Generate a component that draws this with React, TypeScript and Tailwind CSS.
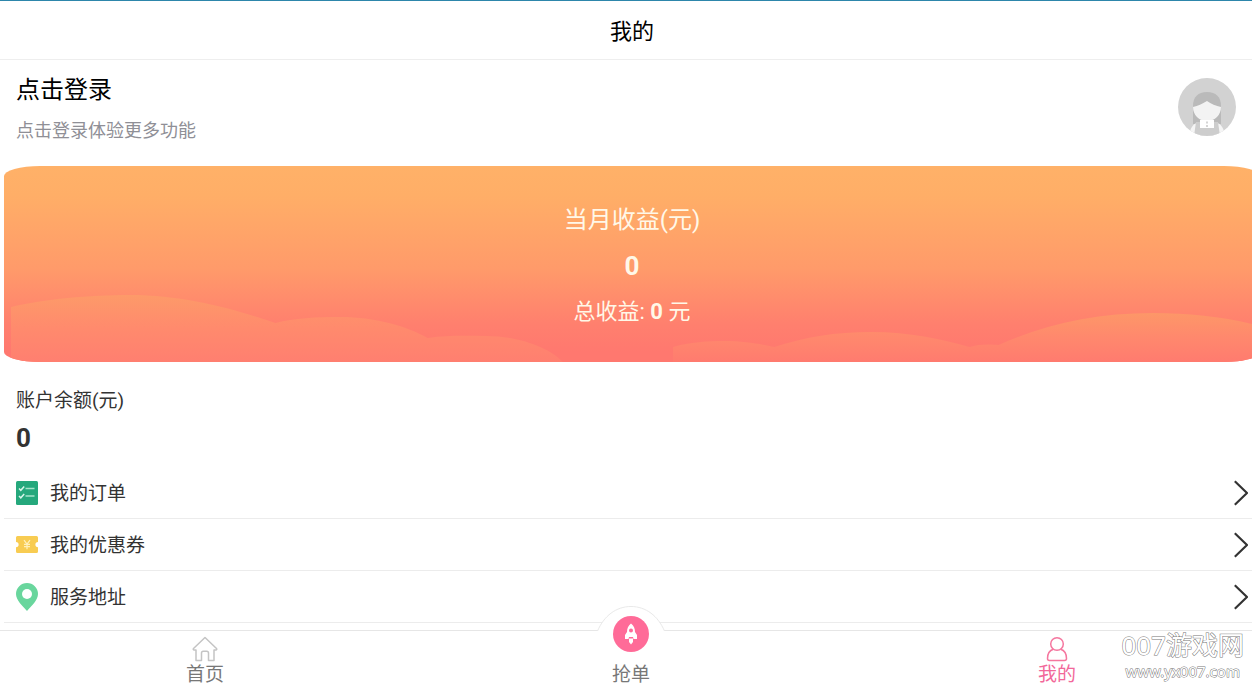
import type { ReactNode } from 'react'

function OrderIcon() {
  return (
    <svg viewBox="0 0 22 24" className="h-6 w-[22px]" fill="none" aria-hidden="true">
      <rect width="22" height="24" rx="1.5" fill="#25a87c" />
      <path d="M3 7.5l1.8 1.8L8.2 5.6M3 15l1.8 1.8 3.4-3.7" stroke="#d9f5ea" strokeWidth="1.5" />
      <path d="M9.5 7.5h9M9.5 15h9" stroke="#a5e2ca" strokeWidth="1.3" />
    </svg>
  )
}

function CouponIcon() {
  return (
    <svg viewBox="0 0 22 17" className="h-[17px] w-[22px]" fill="none" aria-hidden="true">
      <path
        d="M1.5 0h19A1.5 1.5 0 0 1 22 1.5V6a2.6 2.6 0 0 0 0 5.2v4.3a1.5 1.5 0 0 1-1.5 1.5h-19A1.5 1.5 0 0 1 0 15.5V11.2A2.6 2.6 0 0 0 0 6V1.5A1.5 1.5 0 0 1 1.5 0Z"
        fill="#f8cc52"
      />
      <path d="M8 4.2l3 3.8 3-3.8M8 8.4h6M8 10.7h6M11 8v5.2" stroke="#fff0bd" strokeWidth="1.2" />
    </svg>
  )
}

function PinIcon() {
  return (
    <svg viewBox="0 0 22 28" className="h-7 w-[22px]" aria-hidden="true">
      <path d="M11 0a11 11 0 0 1 11 11c0 6.2-6.5 12-11 17C6.5 23 0 17.2 0 11A11 11 0 0 1 11 0Z" fill="#69d69d" />
      <circle cx="11" cy="11" r="5" fill="#fff" />
    </svg>
  )
}

function ChevronIcon() {
  return (
    <svg viewBox="0 0 14 26" className="h-[26px] w-[14px]" fill="none" aria-hidden="true">
      <path d="M.8 1.2 13 13 .8 24.8" stroke="#333" strokeWidth="2.2" />
    </svg>
  )
}

function Avatar() {
  return (
    <svg viewBox="0 0 58 58" className="h-[58px] w-[58px]" aria-hidden="true">
      <clipPath id="avatar-circle">
        <circle cx="29" cy="29" r="29" />
      </clipPath>
      <g clipPath="url(#avatar-circle)">
        <rect width="58" height="58" fill="#d2d2d2" />
        {/* Hair */}
        <path d="M15 28C15 19 20 14 29 14s14 5 14 14v18H15Z" fill="#bababa" />
        {/* Shoulders and shirt */}
        <path d="M11 58c1-8 4-12 8-13h20c4 1 7 5 8 13Z" fill="#f5f5f5" />
        <path d="M18 44h22l2 14H16Z" fill="#cdcdcd" />
        {/* Face */}
        <path d="M15 29c5-1 9-3 14-6 4 3 9 5 14 6 0 8-6 14-14 14s-14-6-14-14Z" fill="#f3f3f3" />
        <path d="M22 42h14v8H22Z" fill="#fff" />
        <path d="M28 43.5h2v2h-2zM28 47h2v2h-2z" fill="#d5d5d5" />
      </g>
    </svg>
  )
}

function Clouds() {
  return (
    <svg
      viewBox="0 0 1254 196"
      preserveAspectRatio="none"
      className="absolute inset-0 h-full w-full"
      aria-hidden="true"
    >
      <defs>
        <linearGradient id="cloud-left" gradientUnits="userSpaceOnUse" x1="0" y1="129" x2="0" y2="196">
          <stop offset="0" stopColor="#fd9a69" />
          <stop offset=".5" stopColor="#ff8a6d" />
          <stop offset="1" stopColor="#ff7f70" />
        </linearGradient>
        <linearGradient id="cloud-right" gradientUnits="userSpaceOnUse" x1="0" y1="147" x2="0" y2="196">
          <stop offset="0" stopColor="#fd9768" />
          <stop offset=".5" stopColor="#ff886d" />
          <stop offset="1" stopColor="#ff7b6f" />
        </linearGradient>
      </defs>
      <path
        d="M7 196V141C40 133 85 129 126 129C180 129 230 143 271 157C290 152 312 151 336 151C370 151 402 160 423 172C445 169 462 170 481 170C515 170 545 182 558 196Z"
        fill="url(#cloud-left)"
      />
      <path
        d="M668 196V181C685 176 702 175 720 175C740 175 755 178 769 181C800 171 830 166 866 166C905 166 935 173 964 181C972 178 985 178 993 179C1040 158 1090 147 1147 147C1185 147 1220 151 1254 160V196Z"
        fill="url(#cloud-right)"
      />
    </svg>
  )
}

function HomeIcon() {
  return (
    <svg viewBox="0 0 26 26" className="h-[26px] w-[26px]" fill="none" stroke="#c4c4c4" strokeWidth="1.5" strokeLinejoin="round" aria-hidden="true">
      <path d="M13 1.5 1.5 12.5c-.6.7-.2 1.5.6 1.5H4v10.5h5.5V17c0-1.2.6-1.8 1.8-1.8h3.4c1.2 0 1.8.6 1.8 1.8v7.5H22V14h1.9c.8 0 1.2-.8.6-1.5Z" />
    </svg>
  )
}

function UserIcon() {
  return (
    <svg viewBox="0 0 26 26" className="h-[26px] w-[26px]" fill="none" stroke="#f5779f" strokeWidth="1.5" aria-hidden="true">
      <circle cx="13" cy="8" r="6.3" />
      <path d="M9.3 13.3C5.5 14.5 3.5 18 3.5 22.5c0 1.3.6 2 2 2h15c1.4 0 2-.7 2-2 0-4.5-2-8-5.800-9.200" />
    </svg>
  )
}

function RocketIcon() {
  return (
    <svg viewBox="0 0 36 36" className="h-9 w-9" aria-hidden="true">
      <circle cx="18" cy="18" r="18" fill="#ff6b98" />
      <path
        fillRule="evenodd"
        d="M18 7.5c2.8 2 4 5 4 8.5l2 3v4h-3.5l-.5-2h-4l-.5 2H12v-4l2-3C14 12.5 15.200 9.500 18 7.500Zm0 5a2 2 0 1 0 0 4 2 2 0 0 0 0-4Z"
        fill="#fff"
      />
      <path d="M16 22.5h4v3.5l-2 2.5-2-2.5Z" fill="#fff" />
    </svg>
  )
}

const menu = [
  { name: '我的订单', icon: OrderIcon },
  { name: '我的优惠券', icon: CouponIcon },
  { name: '服务地址', icon: PinIcon },
]

function NavItem({ label, active, children }: { label: string; active?: boolean; children: ReactNode }) {
  return (
    <a
      href="#"
      aria-current={active ? 'page' : undefined}
      className={`relative flex flex-col items-center pt-[5px] text-[19px] leading-5 ${
        active ? 'text-[#f2689a]' : 'text-[#777]'
      }`}
    >
      <span className="h-[29px]">{children}</span>
      <span>{label}</span>
    </a>
  )
}

export default function App() {
  return (
    <div className="flex h-screen flex-col overflow-hidden border-t border-[#2d86ab] bg-white text-[#333] [font-family:Roboto,Noto_Sans_CJK_SC,sans-serif]">
      <div className="-mr-3 flex-1">
        <header className="border-b border-[#eee] pt-[15px] pb-[11px] text-center">
          <h1 className="text-[22px] leading-8 text-black">我的</h1>
        </header>

        <main>
          {/* Login */}
          <button type="button" className="flex w-full items-start justify-between pt-3 pr-7 pb-5 pl-4 text-left">
            <span className="flex flex-col">
              <span className="text-2xl leading-9 text-black">点击登录</span>
              <span className="mt-2 text-lg leading-[30px] text-[#8f8f96]">点击登录体验更多功能</span>
            </span>
            <span className="pt-1.5">
              <Avatar />
            </span>
          </button>

          {/* Income */}
          <section className="relative mr-1 ml-1 overflow-hidden rounded-[36px/10px] bg-[linear-gradient(#ffb168,#ffae67_15%,#ff9a6a_53%,#ff806e_80%,#ff786f_95%)] pt-9 pb-8 text-center text-[#fff8e8]">
            <Clouds />
            <div className="relative">
              <h2 className="text-2xl leading-9">当月收益(元)</h2>
              <p className="my-2 text-[26px] leading-10 font-bold">0</p>
              <p className="text-[22px] leading-9">
                总收益: <b>0</b> 元
              </p>
            </div>
          </section>

          {/* Balance */}
          <section className="px-4 pt-6 pb-[9px]">
            <h2 className="text-[19px] leading-[30px]">账户余额(元)</h2>
            <p className="mt-0.5 text-[26px] leading-10 font-bold">0</p>
          </section>

          <ul className="ml-1">
            {menu.map((item) => {
              const Icon = item.icon
              return (
                <li key={item.name} className="border-b border-[#ececec]">
                  <a href="#" className="flex h-[51px] items-center pr-4 pl-3 text-[19px]">
                    <Icon />
                    <span className="ml-3 flex-1 pt-1">{item.name}</span>
                    <ChevronIcon />
                  </a>
                </li>
              )
            })}
          </ul>
        </main>
      </div>

      <nav className="relative border-t border-[#e6e6e6] bg-white">
        <div className="-mr-[18px] -ml-2 grid h-[54px] grid-cols-3">
          <NavItem label="首页">
            <HomeIcon />
          </NavItem>
          <NavItem label="抢单">
            {/* Raised bump behind the rocket */}
            <svg viewBox="0 0 70 26" className="absolute -top-[25px] left-1/2 h-[26px] w-[70px] -translate-x-1/2" aria-hidden="true">
              <path d="M1 26C8 10 20 .5 35 .5S62 10 69 26Z" fill="#fff" />
              <path d="M1.5 25C8 10 20 .5 35 .5S62 10 68.5 25" fill="none" stroke="#e9e9e9" />
            </svg>
            <span className="absolute -top-[15px] left-1/2 -translate-x-1/2">
              <RocketIcon />
            </span>
          </NavItem>
          <NavItem label="我的" active>
            <UserIcon />
          </NavItem>
        </div>

        <div className="absolute right-2 bottom-1 text-center text-white [font-family:Noto_Sans,Noto_Sans_CJK_SC,sans-serif] [paint-order:stroke_fill] [-webkit-text-stroke:1px_#777]">
          <p className="text-[26px] leading-8">007游戏网</p>
          <p className="text-[15px] leading-5">www.yx007.com</p>
        </div>
      </nav>
    </div>
  )
}
